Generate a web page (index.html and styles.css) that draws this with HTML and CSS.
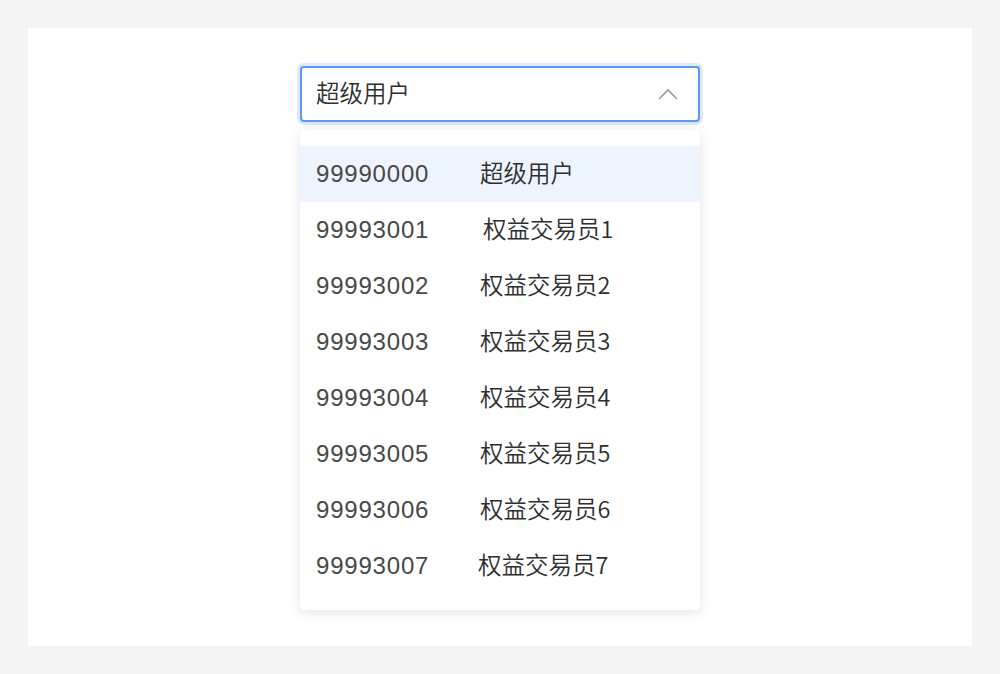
FILE: index.html
```html
<!DOCTYPE html>
<html lang="zh-CN">
<head>
<meta charset="utf-8">
<title>Select</title>
<link rel="stylesheet" href="styles.css">
</head>
<body>
<div class="page">
  <div class="panel">
    <div class="select">
      <div class="select-box">
        <span class="select-value">超级用户</span>
        <svg class="chevron" width="20" height="12" viewBox="0 0 20 12">
          <path d="M1 11 L10 2 L19 11" fill="none" stroke="#9a9a9a" stroke-width="1.6"/>
        </svg>
      </div>
      <ul class="menu">
        <li class="item active"><span class="code">99990000</span><span class="name">超级用户</span></li>
        <li class="item"><span class="code">99993001</span><span class="name shift-r">权益交易员1</span></li>
        <li class="item"><span class="code">99993002</span><span class="name">权益交易员2</span></li>
        <li class="item"><span class="code">99993003</span><span class="name">权益交易员3</span></li>
        <li class="item"><span class="code">99993004</span><span class="name">权益交易员4</span></li>
        <li class="item"><span class="code">99993005</span><span class="name">权益交易员5</span></li>
        <li class="item"><span class="code">99993006</span><span class="name">权益交易员6</span></li>
        <li class="item"><span class="code">99993007</span><span class="name shift-l">权益交易员7</span></li>
      </ul>
    </div>
  </div>
</div>
</body>
</html>
```
FILE: styles.css
```css
html, body {
  margin: 0;
  padding: 0;
}
body {
  background: #f4f4f4;
  font-family: "Liberation Sans", "Noto Sans CJK SC", sans-serif;
  color: #333333;
}
.page {
  width: 1000px;
  height: 674px;
  padding: 28px;
  box-sizing: border-box;
}
.panel {
  background: #ffffff;
  height: 618px;
  display: flex;
  justify-content: center;
  padding-top: 38px;
  box-sizing: border-box;
}
.select {
  width: 400px;
}
.select-box {
  height: 56px;
  box-sizing: border-box;
  border: 2px solid #5a97f7;
  border-radius: 4px;
  box-shadow: 0 0 0 3px #dde9fd;
  display: flex;
  align-items: center;
  justify-content: space-between;
  padding: 0 20px 3px 14px;
  background: #fff;
}
.select-value {
  font-family: "Noto Sans CJK SC", sans-serif;
  font-weight: 350;
  font-size: 23.5px;
  line-height: 1;
  color: #2e2e2e;
}
.chevron {
  display: block;
  margin-top: 3px;
}
.menu {
  list-style: none;
  margin: 8px 0 0;
  padding: 16px 0;
  background: #fff;
  border-radius: 4px;
  box-shadow: 0 2px 12px rgba(0, 0, 0, 0.12);
}
.item {
  height: 56px;
  box-sizing: border-box;
  display: flex;
  align-items: center;
  padding: 0 0 0 16px;
  font-size: 24px;
  line-height: 1;
  color: #2e2e2e;
}
.item.active {
  background: #edf4fe;
}
.code {
  width: 164px;
  font-family: "Liberation Sans", sans-serif;
  letter-spacing: 0.8px;
  color: #484848;
}
.name {
  font-family: "Noto Sans CJK SC", sans-serif;
  font-weight: 350;
  font-size: 23.5px;
  position: relative;
  top: -1px;
}
.shift-r {
  margin-left: 3px;
}
.shift-l {
  margin-left: -2px;
}
```
